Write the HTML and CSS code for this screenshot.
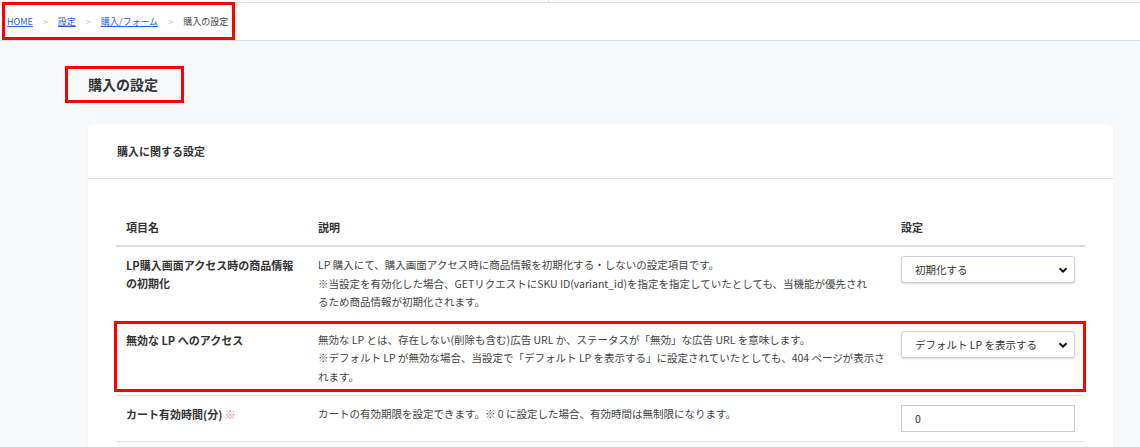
FILE: index.html
```html
<!DOCTYPE html>
<html lang="ja">

<head>
  <meta charset="UTF-8">
  <meta name="viewport" content="width=device-width, initial-scale=1">
  <title>購入の設定</title>

  <link rel="stylesheet" href="styles.css">
</head>

<body>
  <div class="topbar">
    <div class="topbar_left"></div>
  </div>

  <div class="header">
    <div class="breadcrumb mark_box">
      <a href="#" class="crumb_link">HOME</a>
      <span class="crumb_sep">&gt;</span>
      <a href="#" class="crumb_link">設定</a>
      <span class="crumb_sep">&gt;</span>
      <a href="#" class="crumb_link">購入/フォーム</a>
      <span class="crumb_sep">&gt;</span>
      <span class="crumb_now">購入の設定</span>
    </div>
  </div>

  <div class="main">
    <h1 class="page_title mark_box">購入の設定</h1>

    <div class="card">
      <div class="card_head">購入に関する設定</div>

      <div class="card_body">
        <div class="grid_row grid_head">
          <div class="cell">項目名</div>
          <div class="cell">説明</div>
          <div class="cell">設定</div>
        </div>

        <div class="grid_row">
          <div class="cell label">LP購入画面アクセス時の商品情報の初期化</div>
          <div class="cell desc">
            LP 購入にて、購入画面アクセス時に商品情報を初期化する・しないの設定項目です。<br>
            ※当設定を有効化した場合、GETリクエストにSKU ID(variant_id)を指定を指定していたとしても、当機能が優先され<br>るため商品情報が初期化されます。
          </div>
          <div class="cell">
            <div class="select_wrap">
              <select class="select">
                <option>初期化する</option>
                <option>初期化しない</option>
              </select>
              <svg class="chevron" width="10" height="10" viewBox="0 0 10 10">
                <path d="M1.5 3.2 L5 6.7 L8.5 3.2" fill="none" stroke="#111" stroke-width="2"/>
              </svg>
            </div>
          </div>
        </div>

        <div class="grid_row marked">
          <div class="cell label">無効な LP へのアクセス</div>
          <div class="cell desc">
            無効な LP とは、存在しない(削除も含む)広告 URL か、ステータスが「無効」な広告 URL を意味します。<br>
            ※デフォルト LP が無効な場合、当設定で「デフォルト LP を表示する」に設定されていたとしても、404 ページが表示さ<br>れます。
          </div>
          <div class="cell">
            <div class="select_wrap">
              <select class="select">
                <option>デフォルト LP を表示する</option>
                <option>404 ページを表示する</option>
              </select>
              <svg class="chevron" width="10" height="10" viewBox="0 0 10 10">
                <path d="M1.5 3.2 L5 6.7 L8.5 3.2" fill="none" stroke="#111" stroke-width="2"/>
              </svg>
            </div>
          </div>
        </div>

        <div class="grid_row">
          <div class="cell label">カート有効時間(分) <span class="req">※</span></div>
          <div class="cell desc">カートの有効期限を設定できます。※ 0 に設定した場合、有効時間は無制限になります。</div>
          <div class="cell">
            <input class="input" type="text" value="0">
          </div>
        </div>
      </div>
    </div>
  </div>
</body>

</html>
```

FILE: styles.css
```css
* {
  margin: 0;
  padding: 0;
  box-sizing: border-box;
}

body {
  background-color: #f7f8fa;
  font-family: "Noto Sans CJK JP", "Noto Sans", sans-serif;
  color: #333;
}

.topbar {
  height: 2px;
  background-color: #fff;
}

.topbar_left {
  width: 549px;
  height: 2px;
  border-right: 1px solid #ddd;
}

.header {
  height: 39px;
  background-color: #fff;
  border-top: 1px solid #ddd;
  border-bottom: 1px solid #ddd;
}

.mark_box {
  border: 3px solid #f00;
}

.breadcrumb {
  display: inline-flex;
  align-items: center;
  height: 38px;
  margin: -1px 0 0 2px;
  padding: 0 4px 0 2px;
  font-size: 9px;
}

.crumb_link {
  color: #1d64e6;
  text-decoration: underline;
}

.crumb_sep {
  color: #c4c4c4;
  padding: 0 10px;
}

.crumb_now {
  color: #444;
}

.main {
  padding: 25px 27px 0 88px;
}

.page_title {
  display: inline-block;
  margin-left: -23px;
  padding: 0 23px 0 20px;
  height: 37px;
  line-height: 31px;
  font-size: 14px;
  font-weight: bold;
  color: #333;
}

.card {
  margin-top: 21px;
  background-color: #fff;
  border-radius: 6px;
  box-shadow: 0 1px 3px rgba(0, 0, 0, 0.05);
}

.card_head {
  padding: 20px 29px;
  line-height: 14px;
  font-size: 11px;
  font-weight: bold;
  border-bottom: 1px solid #ddd;
}

.card_body {
  padding: 30px 28px;
}

.grid_row {
  display: grid;
  grid-template-columns: 192px 583px 194px;
  border-bottom: 1px solid #e3e3e3;
}

.grid_head {
  border-bottom: 2px solid #ddd;
  font-size: 11px;
  font-weight: bold;
}

.cell {
  padding: 9px 10px;
  line-height: 18px;
}

.label {
  font-size: 11px;
  font-weight: bold;
  color: #333;
}

.desc {
  padding-right: 2px;
  font-size: 10.5px;
  line-height: 18.5px;
  color: #444;
}

.req {
  color: #f08a8a;
  font-weight: normal;
}

.marked {
  position: relative;
}

.marked::after {
  content: "";
  position: absolute;
  left: -2px;
  right: -1px;
  top: -1px;
  bottom: 3px;
  border: 3px solid #f00;
  pointer-events: none;
}

.select_wrap {
  position: relative;
  width: 174px;
}

.select {
  appearance: none;
  width: 174px;
  height: 27px;
  padding: 0 24px 0 13px;
  font-family: inherit;
  font-size: 10.5px;
  color: #333;
  background-color: #fff;
  border: 1px solid #cdd0dc;
  border-radius: 3px;
  box-shadow: 0 1px 2px rgba(0, 0, 0, 0.15);
}

.chevron {
  position: absolute;
  right: 7px;
  top: 9px;
  pointer-events: none;
}

.input {
  width: 174px;
  height: 27px;
  padding: 0 13px;
  font-family: inherit;
  font-size: 10.5px;
  color: #333;
  border: 1px solid #ccc;
  border-radius: 0;
}
```
